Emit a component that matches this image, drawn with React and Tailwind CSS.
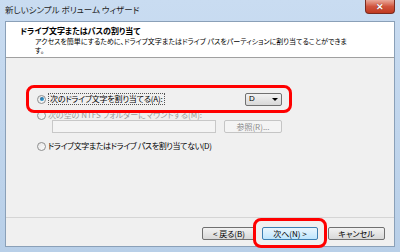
const jp = "[font-family:'Noto_Sans_CJK_JP','Noto_Sans',sans-serif] [font-feature-settings:'palt']";

const Radio = ({ checked }) => (
  <span className="relative flex h-[9px] w-[9px] shrink-0 items-center justify-center rounded-full border border-[#8e8f8f] bg-gradient-to-br from-[#e6e6e6] to-[#fbfbfb]">
    {checked && <span className="h-[4px] w-[4px] rounded-full bg-gradient-to-br from-[#2a628f] to-[#29a9e3]" />}
  </span>
);

const WinButton = ({ children, primary, disabled, className = '' }) => (
  <div
    className={`flex h-[13px] items-center justify-center rounded-[2px] border text-[8px] leading-none ${
      primary
        ? 'border-[#3c7fb1] bg-gradient-to-b from-[#eaf6fd] to-[#bee6fd]'
        : disabled
        ? 'border-[#c5c5c5] bg-[#f4f4f4] text-[#8a8a8a]'
        : 'border-[#707070] bg-gradient-to-b from-[#f2f2f2] to-[#d8d8d8]'
    } ${className}`}
  >
    {children}
  </div>
);

export default function App() {
  return (
    <div className={`relative flex h-[252px] w-[400px] flex-col overflow-hidden bg-gradient-to-b from-[#c9dcf1] to-[#b8cfe8] ${jp}`}>
      {/* title bar */}
      <div className="flex h-[21px] shrink-0 items-start justify-between pl-[5px] pr-[5px]">
        <span className="mt-[4px] text-[8.5px] leading-[11px] text-[#1e1e1e]">新しいシンプル ボリューム ウィザード</span>
        <div className="flex h-[14px] w-[30px] items-center justify-center rounded-b-[4px] border border-t-0 border-[#7a2a1f] bg-gradient-to-b from-[#e9a99b] via-[#d0543e] to-[#c0391f]">
          <span className="text-[9px] font-bold leading-none text-white [text-shadow:0_0_1px_#5a1a10]">✕</span>
        </div>
      </div>

      {/* client */}
      <div className="mx-[5px] flex flex-1 flex-col border border-[#8aa0b8] bg-[#f0f0f0]">
        <div className="flex h-[36px] flex-col border-b border-[#a0a0a0] bg-white pl-[14px] pt-[4px]">
          <span className="text-[8px] font-bold leading-[10px] text-black">ドライブ文字またはパスの割り当て</span>
          <span className="pl-[15px] pt-[1px] text-[7px] leading-[9px] text-black">
            アクセスを簡単にするために、ドライブ文字またはドライブ パスをパーティションに割り当てることができま
            <br />
            す。
          </span>
        </div>

        <div className="flex flex-1 flex-col pl-[31px] pt-[34px] text-[8px] leading-none">
          <div className="flex h-[14px] items-center">
            <div className="flex w-[208px] items-center gap-[2px]">
              <Radio checked />
              <span className="border border-dotted border-[#555] px-[1px] py-[1px] tracking-[-0.2px] text-black">次のドライブ文字を割り当てる(A):</span>
            </div>
            <div className="flex h-[13px] w-[37px] items-center justify-between rounded-[2px] border border-[#707070] bg-gradient-to-b from-[#f2f2f2] to-[#d8d8d8] pl-[3px] pr-[3px]">
              <span className="font-['Liberation_Sans'] text-[8px] text-black">D</span>
              <span className="h-0 w-0 border-x-[3px] border-t-[3px] border-x-transparent border-t-black" />
            </div>
          </div>

          <div className="mt-[4px] flex h-[10px] items-center gap-[2px]">
            <Radio />
            <span className="text-[#9a9a9a]">次の空の NTFS フォルダーにマウントする(M):</span>
          </div>
          <div className="flex items-center pl-[15px]">
            <div className="h-[13px] w-[164px] border border-[#c8c8c8] bg-[#f4f4f4]" />
            <WinButton disabled className="ml-[8px] w-[58px]">参照(R)...</WinButton>
          </div>

          <div className="mt-[7px] flex h-[12px] items-center gap-[2px]">
            <Radio />
            <span className="tracking-[-0.4px] text-black">ドライブ文字またはドライブ パスを割り当てない(D)</span>
          </div>
        </div>

        <div className="flex h-[29px] shrink-0 items-start justify-end border-t border-[#d5d5d5] pr-[9px] pt-[9px]">
          <WinButton className="w-[54px]">&lt; 戻る(B)</WinButton>
          <WinButton primary className="ml-[6px] w-[56px]">次へ(N) &gt;</WinButton>
          <WinButton className="ml-[10px] w-[57px]">キャンセル</WinButton>
        </div>
      </div>
      <div className="h-[5px] shrink-0" />

      {/* red annotation marks */}
      <div className="absolute left-[26px] top-[85px] h-[28px] w-[266px] rounded-[8px] border-[3px] border-[#ff0000]" />
      <div className="absolute left-[253px] top-[218px] h-[30px] w-[74px] rounded-[8px] border-[3px] border-[#ff0000]" />
    </div>
  );
}
